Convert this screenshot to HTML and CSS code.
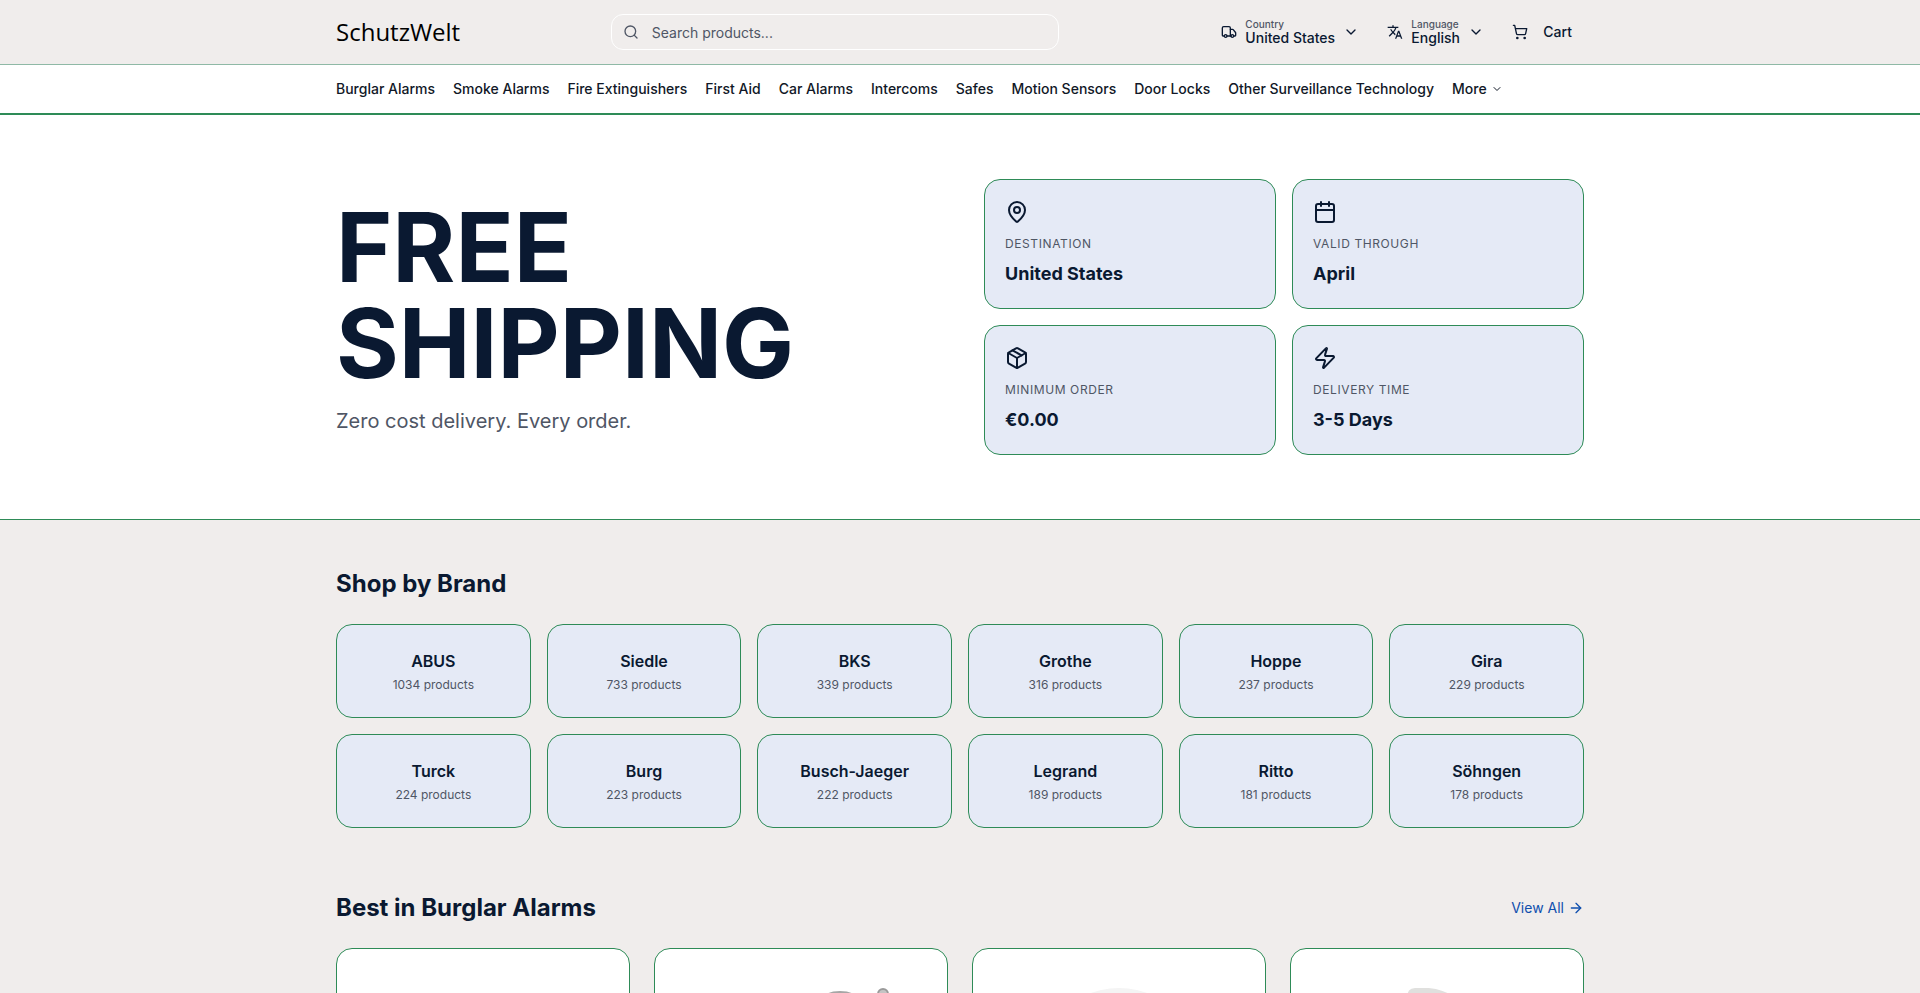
FILE: index.html
```html
<!DOCTYPE html>
<html lang="en">
<head>
    <meta charset="UTF-8">
    <meta name="viewport" content="width=device-width, initial-scale=1.0">
    <title>SchutzWelt</title>
    <link rel="stylesheet" href="styles.css">
</head>
<body>
    <header class="header">
        <div class="container header-row">
            <a href="#" class="logo">SchutzWelt</a>

            <form class="search" role="search">
                <svg class="icon icon-sm search-icon" viewBox="0 0 24 24"><circle cx="11" cy="11" r="8"/><path d="m21 21-4.3-4.3"/></svg>
                <input type="text" class="search-input" placeholder="Search products..." aria-label="Search products">
            </form>

            <div class="actions">
                <div class="picker">
                    <svg class="icon icon-sm" viewBox="0 0 24 24"><path d="M14 18V6a2 2 0 0 0-2-2H4a2 2 0 0 0-2 2v11a1 1 0 0 0 1 1h2"/><path d="M15 18H9"/><path d="M19 18h2a1 1 0 0 0 1-1v-3.65a1 1 0 0 0-.22-.624l-3.48-4.35A1 1 0 0 0 17.52 8H14"/><circle cx="17" cy="18" r="2"/><circle cx="7" cy="18" r="2"/></svg>
                    <div class="picker-text">
                        <label for="country">Country</label>
                        <select id="country">
                            <option>United States</option>
                        </select>
                    </div>
                    <svg class="icon icon-sm" viewBox="0 0 24 24"><path d="m6 9 6 6 6-6"/></svg>
                </div>
                <div class="picker">
                    <svg class="icon icon-sm icon-solid" viewBox="0 0 24 24"><path d="m12.87 15.07-2.54-2.51.03-.03A17.52 17.52 0 0 0 14.07 6H17V4h-7V2H8v2H1v1.99h11.17C11.5 7.92 10.44 9.75 9 11.35 8.07 10.32 7.3 9.19 6.69 8h-2c.73 1.63 1.73 3.17 2.98 4.56l-5.09 5.02L4 19l5-5 3.11 3.11.76-2.04zM18.5 10h-2L12 22h2l1.12-3h4.75L21 22h2l-4.5-12zm-2.62 7 1.62-4.33L19.12 17h-3.24z"/></svg>
                    <div class="picker-text">
                        <label for="language">Language</label>
                        <select id="language">
                            <option>English</option>
                        </select>
                    </div>
                    <svg class="icon icon-sm" viewBox="0 0 24 24"><path d="m6 9 6 6 6-6"/></svg>
                </div>
                <button type="button" class="cart">
                    <svg class="icon icon-sm" viewBox="0 0 24 24"><circle cx="8" cy="21" r="1"/><circle cx="19" cy="21" r="1"/><path d="M2.05 2.05h2l2.66 12.42a2 2 0 0 0 2 1.58h9.78a2 2 0 0 0 1.95-1.57l1.65-7.43H5.12"/></svg>
                    Cart
                </button>
            </div>
        </div>
    </header>

    <nav class="nav">
        <div class="container nav-row">
            <a href="#">Burglar Alarms</a>
            <a href="#">Smoke Alarms</a>
            <a href="#">Fire Extinguishers</a>
            <a href="#">First Aid</a>
            <a href="#">Car Alarms</a>
            <a href="#">Intercoms</a>
            <a href="#">Safes</a>
            <a href="#">Motion Sensors</a>
            <a href="#">Door Locks</a>
            <a href="#">Other Surveillance Technology</a>
            <button type="button" class="more">
                More
                <svg class="icon icon-xs" viewBox="0 0 24 24"><path d="m6 9 6 6 6-6"/></svg>
            </button>
        </div>
    </nav>

    <main>
        <section class="hero">
            <div class="container hero-row">
                <div>
                    <h1>FREE SHIPPING</h1>
                    <p class="hero-text">Zero cost delivery. Every order.</p>
                </div>
                <div class="facts">
                    <div class="fact">
                        <svg class="icon" viewBox="0 0 24 24"><path d="M20 10c0 4.993-5.539 10.193-7.399 11.799a1 1 0 0 1-1.202 0C9.539 20.193 4 14.993 4 10a8 8 0 0 1 16 0"/><circle cx="12" cy="10" r="3"/></svg>
                        <p class="fact-label">Destination</p>
                        <p class="fact-value">United States</p>
                    </div>
                    <div class="fact">
                        <svg class="icon" viewBox="0 0 24 24"><path d="M8 2v4"/><path d="M16 2v4"/><rect width="18" height="18" x="3" y="4" rx="2"/><path d="M3 10h18"/></svg>
                        <p class="fact-label">Valid through</p>
                        <p class="fact-value">April</p>
                    </div>
                    <div class="fact">
                        <svg class="icon" viewBox="0 0 24 24"><path d="M11 21.73a2 2 0 0 0 2 0l7-4A2 2 0 0 0 21 16V8a2 2 0 0 0-1-1.73l-7-4a2 2 0 0 0-2 0l-7 4A2 2 0 0 0 3 8v8a2 2 0 0 0 1 1.73z"/><path d="M12 22V12"/><path d="m3.3 7 8.7 5 8.7-5"/><path d="m7.5 4.27 9 5.15"/></svg>
                        <p class="fact-label">Minimum order</p>
                        <p class="fact-value">€0.00</p>
                    </div>
                    <div class="fact">
                        <svg class="icon" viewBox="0 0 24 24"><path d="M4 14a1 1 0 0 1-.78-1.63l9.9-10.2a.5.5 0 0 1 .86.46l-1.92 6.02A1 1 0 0 0 13 10h7a1 1 0 0 1 .78 1.63l-9.9 10.2a.5.5 0 0 1-.86-.46l1.92-6.02A1 1 0 0 0 11 14z"/></svg>
                        <p class="fact-label">Delivery time</p>
                        <p class="fact-value">3-5 Days</p>
                    </div>
                </div>
            </div>
        </section>

        <div class="container content">
            <section>
                <div class="section-head">
                    <h2>Shop by Brand</h2>
                </div>
                <div class="brands">
                    <a href="#" class="brand"><h3>ABUS</h3><p>1034 products</p></a>
                    <a href="#" class="brand"><h3>Siedle</h3><p>733 products</p></a>
                    <a href="#" class="brand"><h3>BKS</h3><p>339 products</p></a>
                    <a href="#" class="brand"><h3>Grothe</h3><p>316 products</p></a>
                    <a href="#" class="brand"><h3>Hoppe</h3><p>237 products</p></a>
                    <a href="#" class="brand"><h3>Gira</h3><p>229 products</p></a>
                    <a href="#" class="brand"><h3>Turck</h3><p>224 products</p></a>
                    <a href="#" class="brand"><h3>Burg</h3><p>223 products</p></a>
                    <a href="#" class="brand"><h3>Busch-Jaeger</h3><p>222 products</p></a>
                    <a href="#" class="brand"><h3>Legrand</h3><p>189 products</p></a>
                    <a href="#" class="brand"><h3>Ritto</h3><p>181 products</p></a>
                    <a href="#" class="brand"><h3>Söhngen</h3><p>178 products</p></a>
                </div>
            </section>

            <section>
                <div class="section-head">
                    <h2>Best in Burglar Alarms</h2>
                    <a href="#" class="view-all">
                        View All
                        <svg class="icon icon-sm" viewBox="0 0 24 24"><path d="M5 12h14"/><path d="m12 5 7 7-7 7"/></svg>
                    </a>
                </div>
                <div class="products">
                    <a href="#" class="product">
                        <svg viewBox="0 0 292 292"><rect x="106" y="70" width="80" height="150" rx="10" fill="#ececec"/></svg>
                    </a>
                    <a href="#" class="product">
                        <!-- padlock shackle and key -->
                        <svg viewBox="0 0 292 292"><path d="M156 120V76a29 29 0 0 1 58 0v44" fill="none" stroke="#a6a6a6" stroke-width="10"/><rect x="140" y="120" width="90" height="100" rx="8" fill="#8f8f8f"/><circle cx="228" cy="45" r="5" fill="#c4c4c4" stroke="#9a9a9a" stroke-width="2"/><path d="M228 51v50" stroke="#9a9a9a" stroke-width="5"/></svg>
                    </a>
                    <a href="#" class="product">
                        <svg viewBox="0 0 292 292"><ellipse cx="146" cy="146" rx="92" ry="107" fill="#f4f4f4"/></svg>
                    </a>
                    <a href="#" class="product">
                        <svg viewBox="0 0 292 292"><path d="M124 39h10c20 0 36 10 44 30v170h-62V49q0-10 8-10z" fill="#e0e0de"/></svg>
                    </a>
                </div>
            </section>
        </div>
    </main>
</body>
</html>
```
FILE: styles.css
```css
*{
    box-sizing: border-box;
    padding: 0;
    margin: 0;
}

body {
    font-family: Inter, "Liberation Sans", sans-serif;
    font-size: 14px;
    line-height: 20px;
    color: #0a1931;
    background-color: #f0edec;
}
a {
    color: inherit;
    text-decoration: none;
}
button,
input,
select {
    font: inherit;
    color: inherit;
    background: none;
    border: none;
}
button {
    cursor: pointer;
}

.container {
    max-width: 1280px;
    margin: 0 auto;
    padding: 0 16px;
}

/* icons */
.icon {
    display: block;
    flex-shrink: 0;
    width: 24px;
    height: 24px;
    fill: none;
    stroke: currentColor;
    stroke-width: 2;
    stroke-linecap: round;
    stroke-linejoin: round;
}
.icon-sm {
    width: 16px;
    height: 16px;
}
.icon-xs {
    width: 12px;
    height: 12px;
}
.icon-solid {
    fill: currentColor;
    stroke: none;
}

/* header */
.header {
    border-bottom: 1px solid #8fb9a6;
}
.header-row {
    display: flex;
    align-items: center;
    justify-content: space-between;
    height: 64px;
}
.logo {
    font-family: "Open Sans", "Noto Sans", sans-serif;
    font-size: 24px;
    line-height: 32px;
    color: #000;
}
.search {
    position: relative;
    width: 448px;
}
.search-icon {
    position: absolute;
    left: 12px;
    top: 10px;
    color: #4f5665;
}
.search-input {
    display: block;
    width: 100%;
    height: 36px;
    padding: 0 12px 0 40px;
    border: 1px solid #fff;
    border-radius: 12px;
}
.search-input::placeholder {
    color: #4f5665;
    opacity: 1;
}
.actions {
    display: flex;
    align-items: center;
    gap: 4px;
    font-weight: 500;
}
.picker {
    display: flex;
    align-items: center;
    gap: 8px;
    padding: 0 12px;
}
.picker-text label {
    display: block;
    font-size: 10px;
    line-height: 12px;
    color: #4f5665;
}
.picker-text select {
    display: block;
    appearance: none;
    line-height: 16px;
}
.cart {
    display: flex;
    align-items: center;
    gap: 15px;
    padding: 8px 12px;
}

/* category bar */
.nav {
    background-color: #fff;
    border-bottom: 2px solid #2e8b57;
}
.nav-row {
    display: flex;
    align-items: center;
    gap: 18px;
    height: 48px;
    font-weight: 500;
    color: #111827;
}
.more {
    display: flex;
    align-items: center;
    gap: 4px;
}

/* hero */
.hero {
    padding: 64px 0;
    background-color: #fff;
    border-bottom: 1px solid #2e8b57;
}
.hero-row {
    display: grid;
    grid-template-columns: 1fr 1fr;
    gap: 48px;
    align-items: center;
}
.hero h1 {
    margin-bottom: 16px;
    font-size: 96px;
    font-weight: 700;
    line-height: 96px;
}
.hero-text {
    font-size: 20px;
    line-height: 28px;
    color: #4f5665;
}
.facts {
    display: grid;
    grid-template-columns: 1fr 1fr;
    gap: 16px;
}
.fact {
    padding: 20px;
    background-color: #e5eaf6;
    border: 1px solid #2e8b57;
    border-radius: 16px;
}
.fact-label {
    margin: 12px 0 8px;
    font-size: 12px;
    line-height: 16px;
    letter-spacing: 0.05em;
    text-transform: uppercase;
    color: #4f5665;
}
.fact-value {
    font-size: 18px;
    font-weight: 700;
    line-height: 28px;
}

/* sections */
.content {
    display: flex;
    flex-direction: column;
    gap: 64px;
    padding-top: 48px;
    padding-bottom: 48px;
}
.section-head {
    display: flex;
    align-items: center;
    justify-content: space-between;
    margin-bottom: 24px;
}
.section-head h2 {
    font-size: 24px;
    font-weight: 700;
    line-height: 32px;
}
.view-all {
    display: flex;
    align-items: center;
    gap: 4px;
    color: #0f4fae;
}
.brands {
    display: grid;
    grid-template-columns: repeat(6, 1fr);
    gap: 16px;
}
.brand {
    padding: 24px 16px;
    text-align: center;
    background-color: #e5eaf6;
    border: 1px solid #2e8b57;
    border-radius: 16px;
}
.brand h3 {
    margin-bottom: 4px;
    font-size: 16px;
    font-weight: 600;
    line-height: 24px;
}
.brand p {
    font-size: 12px;
    line-height: 16px;
    color: #4f5665;
}
.products {
    display: grid;
    grid-template-columns: repeat(4, 1fr);
    gap: 24px;
}
.product {
    overflow: hidden;
    background-color: #fff;
    border: 1px solid #2e8b57;
    border-radius: 16px;
}
.product svg {
    display: block;
    width: 100%;
}
```
